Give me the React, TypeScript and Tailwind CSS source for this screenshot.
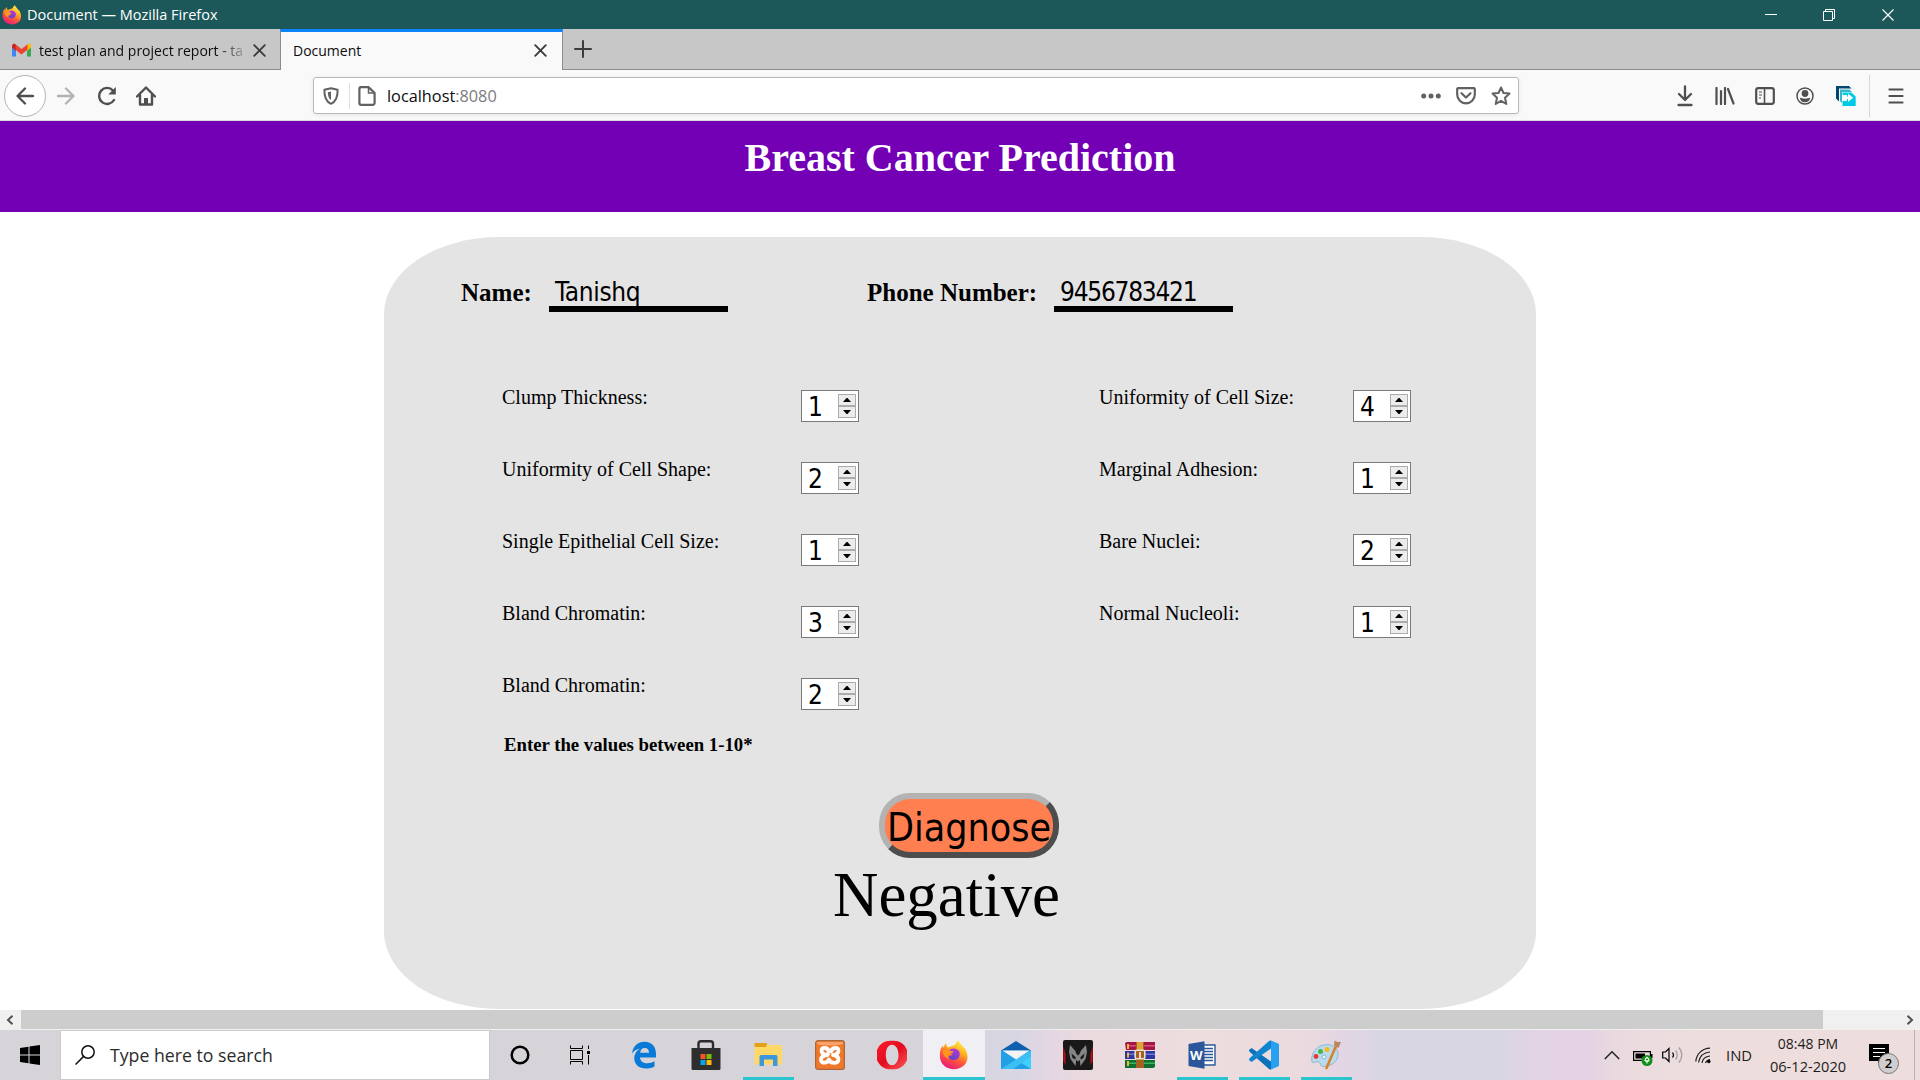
import type { ReactNode } from "react";

const ui = "font-['Open_Sans','Noto_Sans',sans-serif]";
const serif = "font-['Liberation_Serif',serif]";
const tahoma = "font-['DejaVu_Sans_Condensed','DejaVu_Sans',sans-serif] [font-stretch:condensed]";

function Icon({ w, h, children, className = "" }: { w: number; h: number; children: ReactNode; className?: string }) {
  return (
    <svg width={w} height={h} viewBox={`0 0 ${w} ${h}`} fill="none" className={`block shrink-0 ${className}`}>
      {children}
    </svg>
  );
}

function Slot({ className, children }: { className: string; children?: ReactNode }) {
  return <div className={`flex h-full shrink-0 items-center justify-center ${className}`}>{children}</div>;
}

function FirefoxLogo({ size, id }: { size: number; id: string }) {
  return (
    <svg width={size} height={size} viewBox="0 0 30 30" className="block shrink-0">
      <defs>
        <linearGradient id={`${id}a`} x1="0.8" y1="0" x2="0.3" y2="1">
          <stop offset="0" stopColor="#fff44f" />
          <stop offset="0.35" stopColor="#ffb320" />
          <stop offset="0.62" stopColor="#ff5a36" />
          <stop offset="1" stopColor="#e8177f" />
        </linearGradient>
        <linearGradient id={`${id}b`} x1="0.7" y1="0" x2="0.3" y2="1">
          <stop offset="0" stopColor="#b833e1" />
          <stop offset="1" stopColor="#5a45c8" />
        </linearGradient>
      </defs>
      <path d="M16 5C16.5 3 18 1.500 19.500 .5 20 3.500 23 4.500 24.500 7.500 26 7.500 26.500 9 27 10.500 29.800 17 28.500 22 25 25.500 20 30 11 30.500 5.500 26 .5 22 .2 16 1.500 10 2 8 3 6.500 4 5.500L4.500 8 6.500 3 8.500 7.500Z" fill={`url(#${id}a)`} />
      <path d="M12 9C15 7.500 19 8.800 20.500 12 21.500 17 18.500 20 15 20 11.500 20 9.500 18 9.300 15.500 11 16.500 13 15.500 14 14.500 11.500 14 10 12.500 10.500 10.500Z" fill={`url(#${id}b)`} />
      <path d="M3.500 11C6 9.500 8 9.500 10 10.500L15 11.500C14 13 12 13 11 14.500 9 15.500 9 17 10 18.500 6 18 4 15 3.500 11Z" fill="#ff9420" />
    </svg>
  );
}

function TitleBar() {
  return (
    <div className={`flex h-[29px] shrink-0 items-center bg-[#1c5759] text-white ${ui}`}>
      <div className="ml-0.5 flex flex-1 items-center gap-[5px]">
        <FirefoxLogo size={20} id="ft" />
        <span className="whitespace-pre text-[14.500px] leading-[29px]">Document — Mozilla Firefox</span>
      </div>
      <Slot className="w-[58px]">
        <Icon w={14} h={14}><path d="M1 6.500H13" stroke="#fff" /></Icon>
      </Slot>
      <Slot className="w-[58px]">
        <Icon w={14} h={14}>
          <path d="M1.500 3.500H10.500V12.500H1.500ZM3.500 3.500V1.500H12.500V10.500H10.500" stroke="#fff" />
        </Icon>
      </Slot>
      <Slot className="w-[60px]">
        <Icon w={14} h={14}><path d="M1.500 1.500L12.500 12.500M12.500 1.500L1.500 12.500" stroke="#fff" strokeWidth="1.200" /></Icon>
      </Slot>
      <div className="w-[2px]" />
    </div>
  );
}

function TabClose() {
  return (
    <Icon w={13} h={13}><path d="M1.200 1.200L11.800 11.800M11.800 1.200L1.200 11.800" stroke="#3c3c3c" strokeWidth="1.900" strokeLinecap="round" /></Icon>
  );
}

function TabBar() {
  return (
    <div className={`flex h-[41px] shrink-0 bg-[#c7c7c7] text-[14px] text-[#0c0c0d] ${ui}`}>
      <div className="flex w-[280px] items-center border-b border-[#8c8c8c] pl-3 pt-[3px]">
        <Icon w={19} h={15}>
          <path d="M0 3V13.500H4V6Z" fill="#4285f4" />
          <path d="M15 6V13.500H19V3Z" fill="#34a853" />
          <path d="M15 1.500L18 .6 19 2.500V4.500L15 8Z" fill="#fbbc04" />
          <path d="M0 4.500V2.500L1.500 .6 4 1.500V8Z" fill="#c5221f" />
          <path d="M3.500 1.200L9.500 6 15.500 1.200V6.800L9.500 11.500 3.500 6.800Z" fill="#ea4335" />
        </Icon>
        <div className="ml-2 w-[209px] whitespace-nowrap leading-[38px] [mask-image:linear-gradient(to_right,#000_178px,transparent_212px)]">
          test plan and project report - ta
        </div>
        <div className="ml-[5px]"><TabClose /></div>
      </div>
      <div className="flex w-[283px] items-center border-x border-t-[3px] border-x-[#8c8c8c] border-t-[#0a84ff] bg-[#f9f9fa] pb-px pl-3 pr-[15px] leading-[36px]">
        <span className="flex-1">Document</span>
        <TabClose />
      </div>
      <div className="flex flex-1 items-center border-b border-[#8c8c8c] pl-[11px]">
        <Icon w={18} h={18}><path d="M9 1V17M1 9H17" stroke="#3c3c3c" strokeWidth="2" strokeLinecap="round" /></Icon>
      </div>
    </div>
  );
}

function NavBar() {
  const g = "#4f4f50";
  return (
    <div className={`flex h-[51px] shrink-0 items-center border-b border-[#dcdcdc] bg-[#f9f9fa] pl-1 pt-px ${ui}`}>
      <div className="flex size-[42px] items-center justify-center rounded-full border border-[#b4b4b4] bg-white">
        <Icon w={18} h={18}><path d="M17 9H2M9 1.500L1.500 9L9 16.500" stroke={g} strokeWidth="2.300" strokeLinecap="round" strokeLinejoin="round" /></Icon>
      </div>
      <Slot className="w-[40px]">
        <Icon w={18} h={18}><path d="M1 9H16M9 1.500L16.500 9L9 16.500" stroke="#b2b2b3" strokeWidth="2.300" strokeLinecap="round" strokeLinejoin="round" /></Icon>
      </Slot>
      <Slot className="w-[41px]">
        <Icon w={20} h={20}>
          <path d="M17 14A8 8 0 1 1 16 4.500" stroke={g} strokeWidth="2.400" strokeLinecap="round" />
          <path d="M18.800 1V8.500H11.300Z" fill={g} />
        </Icon>
      </Slot>
      <Slot className="w-[38px]">
        <Icon w={20} h={20}>
          <path d="M1 10.500L10 1.500L19 10.500M4 9V18.500H16V9" stroke={g} strokeWidth="2.400" strokeLinecap="round" strokeLinejoin="round" />
          <path d="M8 12H12V19H8Z" fill={g} />
        </Icon>
      </Slot>
      <div className="ml-[148px] flex h-[37px] w-[1206px] items-center rounded-[3px] border border-[#b9b9ba] bg-white shadow-[0_1px_4px_rgba(0,0,0,0.08)]">
        <Slot className="w-[34px]">
          <Icon w={16} h={18}>
            <path d="M8 1.200L14.600 2.800C14.800 9 13.500 14.500 8 16.800 2.500 14.500 1.200 9 1.400 2.800Z" stroke="#616162" strokeWidth="2" strokeLinejoin="round" />
            <path d="M8 4.500V13C5.500 11.500 5 9 4.800 5.300Z" fill="#616162" />
          </Icon>
        </Slot>
        <div className="ml-px h-[26px] w-px bg-[#dedede]" />
        <Slot className="w-[34px]">
          <Icon w={18} h={20}>
            <path d="M3 1.200H10.500L16.600 7V17A1.800 1.800 0 0 1 14.800 18.800H3.200A1.800 1.800 0 0 1 1.400 17V3A1.800 1.800 0 0 1 3 1.200Z" stroke="#616162" strokeWidth="2.200" />
            <path d="M10.500 1.500V7H16.500" stroke="#616162" strokeWidth="1.500" />
          </Icon>
        </Slot>
        <span className="ml-[3px] flex-1 pt-px text-[16.300px] leading-[36px] text-[#0c0c0d]">
          localhost<span className="text-[#7c7c7d]">:8080</span>
        </span>
        <Slot className="w-[36px]">
          <Icon w={20} h={6}>
            <circle cx="2.700" cy="3" r="2.500" fill="#616162" /><circle cx="10" cy="3" r="2.500" fill="#616162" /><circle cx="17.300" cy="3" r="2.500" fill="#616162" />
          </Icon>
        </Slot>
        <Slot className="w-[34px]">
          <Icon w={20} h={18}>
            <path d="M2 1.200H18A.8 .8 0 0 1 18.800 2V7.500A8.800 8.800 0 0 1 1.200 7.500V2A.8 .8 0 0 1 2 1.200Z" stroke="#616162" strokeWidth="2.200" />
            <path d="M5.500 6.200L10 10.500L14.500 6.200" stroke="#616162" strokeWidth="2.200" strokeLinecap="round" strokeLinejoin="round" />
          </Icon>
        </Slot>
        <Slot className="w-[35px]">
          <Icon w={20} h={20}>
            <path d="M10 1.500L12.500 7L18.500 7.600L14 11.800L15.300 18L10 14.800L4.700 18L6 11.800L1.500 7.600L7.500 7Z" stroke="#616162" strokeWidth="2" strokeLinejoin="round" />
          </Icon>
        </Slot>
      </div>
      <div className="ml-auto flex h-full items-center">
        <Slot className="w-[40px]">
          <Icon w={16} h={22}><path d="M8 1.500V14M2 9L8 15L14 9M1.500 20H14.500" stroke={g} strokeWidth="2.300" strokeLinecap="round" strokeLinejoin="round" /></Icon>
        </Slot>
        <Slot className="w-[40px]">
          <Icon w={20} h={18}>
            <path d="M1.500 1V17M6 4V17M10 1V17" stroke={g} strokeWidth="2.200" strokeLinecap="round" />
            <path d="M13 2L18.500 16.500" stroke={g} strokeWidth="2.200" strokeLinecap="round" />
          </Icon>
        </Slot>
        <Slot className="w-[40px]">
          <Icon w={20} h={18}>
            <rect x="1.200" y="1.200" width="17.600" height="15.600" rx="2" stroke={g} strokeWidth="2.200" />
            <path d="M9.500 1V17" stroke={g} strokeWidth="1.600" />
            <path d="M4 5H7M4 8H7M4 11H6" stroke={g} strokeWidth="1.200" />
          </Icon>
        </Slot>
        <Slot className="w-[40px]">
          <Icon w={18} h={18}>
            <circle cx="9" cy="9" r="8" stroke={g} strokeWidth="1.500" />
            <circle cx="9" cy="6.500" r="3.400" fill={g} />
            <path d="M3.800 10.500C6 12 12 12 14.200 10.500 14 13.500 12 15.200 9 15.200 6 15.200 4 13.500 3.800 10.500Z" fill={g} />
          </Icon>
        </Slot>
        <Slot className="w-[41px]">
          <Icon w={20} h={20}>
            <path d="M0 0H13L15.500 2.500H3V15.500L0 12.500Z" fill="#01476b" />
            <path d="M4 3.500H13.500L16 6H6V17L4 15Z" fill="#38b6cc" />
            <path d="M6.500 6.500H15.500L19.700 10.500V20H6.500V15H11V9H6.500Z" fill="#00cbe5" />
            <path d="M6 11.800H13" stroke="#fff" strokeWidth="2.400" />
            <path d="M12 7.500L17 11.800L12 16Z" fill="#fff" />
          </Icon>
        </Slot>
        <div className="ml-[3px] h-[42px] w-px bg-[#d7d7db]" />
        <Slot className="w-[50px] pl-[2px]">
          <Icon w={16} h={18}><path d="M1.500 2.500H14.500M1.500 9H14.500M1.500 15.500H14.500" stroke={g} strokeWidth="2.200" strokeLinecap="round" /></Icon>
        </Slot>
      </div>
    </div>
  );
}

function NumberField({ value }: { value: number }) {
  return (
    <div className="mt-[9px] flex h-8 w-[58px] shrink-0 items-center justify-between border border-[#7a7a7a] bg-white pl-[6px]">
      <span className={`pt-[2px] text-[26px] leading-[28px] text-black ${tahoma}`}>{value}</span>
      <div className="mr-[2px] flex h-6 w-[18px] flex-col">
        <div className="flex h-3 items-center justify-center border border-[#acacac] bg-[#ececec]">
          <Icon w={8} h={4}><path d="M0 4L3.500 0H4.500L8 4Z" fill="#000" /></Icon>
        </div>
        <div className="flex h-3 items-center justify-center border border-[#acacac] bg-[#ececec]">
          <Icon w={8} h={4}><path d="M0 0L3.500 4H4.500L8 0Z" fill="#000" /></Icon>
        </div>
      </div>
    </div>
  );
}

const rows: { left: [string, number]; right?: [string, number] }[] = [
  { left: ["Clump Thickness:", 1], right: ["Uniformity of Cell Size:", 4] },
  { left: ["Uniformity of Cell Shape:", 2], right: ["Marginal Adhesion:", 1] },
  { left: ["Single Epithelial Cell Size:", 1], right: ["Bare Nuclei:", 2] },
  { left: ["Bland Chromatin:", 3], right: ["Normal Nucleoli:", 1] },
  { left: ["Bland Chromatin:", 2] },
];

function Page() {
  return (
    <div className={`flex h-[909px] shrink-0 flex-col bg-white text-black ${serif}`}>
      <div className="h-[91px] shrink-0 bg-[#7300b5] pt-[14px] text-center text-[40px] font-bold leading-[46px] text-white">
        Breast Cancer Prediction
      </div>
      <div className="mx-auto mt-[25px] h-[772px] w-[1152px] shrink-0 rounded-[10%] bg-[#e4e4e4] pt-[38px]">
        <div className="flex h-[37px] pl-[77px]">
          <span className="w-[88px] text-[25px] font-bold leading-[36px]">Name:</span>
          <div className={`w-[179px] border-b-[6px] border-black pl-[6px] text-[26px] leading-[34px] tracking-[-0.3px] ${tahoma}`}>Tanishq</div>
          <span className="ml-[139px] w-[187px] text-[25px] font-bold leading-[36px]">Phone Number:</span>
          <div className={`w-[179px] border-b-[6px] border-black pl-[6px] text-[26px] leading-[34px] tracking-[-1.25px] ${tahoma}`}>9456783421</div>
        </div>
        <div className="mt-[69px] pl-[118px]">
          {rows.map((r, i) => (
            <div key={i} className="flex h-[72px] items-start text-[20px]">
              <span className="w-[299px] leading-[32px]">{r.left[0]}</span>
              <NumberField value={r.left[1]} />
              {r.right && (
                <>
                  <span className="ml-[240px] w-[254px] leading-[32px]">{r.right[0]}</span>
                  <NumberField value={r.right[1]} />
                </>
              )}
            </div>
          ))}
        </div>
        <div className="mt-[-8px] pl-[120px] text-[18.750px] font-bold leading-[24px]">Enter the values between 1-10*</div>
        <button className={`ml-[495px] mt-[36px] flex h-[65px] w-[180px] items-center justify-center rounded-[31px] border-[6px] border-b-[#4d4d4d] border-l-[#b3b3b3] border-r-[#4d4d4d] border-t-[#b3b3b3] bg-[#ff7f50] pt-[3px] text-[39px] leading-none ${tahoma}`}>
          Diagnose
        </button>
        <div className="pl-[449px] text-[62.900px] leading-[74px]">Negative</div>
      </div>
      <div className="mt-px flex h-5 shrink-0 border-b border-[#f0f0f0] bg-[#f0f0f0]">
        <Slot className="w-[21px] pr-[2px]">
          <Icon w={8} h={10}><path d="M6.500 .8L2 5L6.500 9.200" stroke="#505050" strokeWidth="2" /></Icon>
        </Slot>
        <div className="w-[1802px] bg-[#cdcdcd]" />
        <div className="flex-1" />
        <Slot className="w-[21px]">
          <Icon w={8} h={10}><path d="M1.500 .8L6 5L1.500 9.200" stroke="#505050" strokeWidth="2" /></Icon>
        </Slot>
      </div>
    </div>
  );
}

function TaskButton({ running, active, children }: { running?: boolean; active?: boolean; children: ReactNode }) {
  return (
    <div className={`flex h-full w-[62px] shrink-0 flex-col items-center ${active ? "bg-[#f0eff4]" : ""}`}>
      <div className="flex h-[47px] items-center justify-center pt-[3px]">{children}</div>
      <div className={`h-[3px] ${active ? "w-full bg-[#2ac5cf]" : running ? "w-[51px] bg-[#2ac5cf]" : ""}`} />
    </div>
  );
}

function Taskbar() {
  return (
    <div className={`flex h-[50px] shrink-0 items-center bg-[linear-gradient(to_right,#d6d4d8_0px,#d6d4d8_900px,#d9d6e4_1020px,#e5d7e2_1055px,#eadadf_1080px,#eddddd_1200px,#eadadf_1310px,#e3d5e4_1340px,#d9d6e3_1380px,#d9d6e3_1500px,#e3d3e4_1540px,#e3d3e4_1585px,#eadadf_1620px,#eddedd_1700px,#eddedd_1920px)] ${ui}`}>
      <Slot className="w-[61px] pr-px">
        <Icon w={20} h={20}>
          <path d="M0 3L8.500 1.800V9.500H0ZM9.500 1.600L20 0V9.500H9.500ZM0 10.500H8.500V18.200L0 17ZM9.500 10.500H20V20L9.500 18.400Z" fill="#000" />
        </Icon>
      </Slot>
      <div className="flex h-12 w-[428px] items-center bg-white pl-[14px] outline outline-1 outline-[#cbcbcd]">
        <Icon w={20} h={20}>
          <circle cx="13" cy="7" r="6.200" stroke="#111" strokeWidth="1.500" />
          <path d="M8.600 11.400L.6 19.500" stroke="#111" strokeWidth="1.500" />
        </Icon>
        <span className="ml-[15px] text-[17.700px] leading-[48px] text-[#2b2b2b]">Type here to search</span>
      </div>
      <Slot className="w-[62px]">
        <Icon w={20} h={20}><circle cx="10" cy="10" r="8.300" stroke="#000" strokeWidth="2.500" /></Icon>
      </Slot>
      <Slot className="w-[62px] pb-px pr-[4px]">
        <Icon w={22} h={20}>
          <path d="M1.500 .5V3.500H13.500V.5M1.500 5.500H13.500V14.500H1.500ZM1.500 19.500V16.500H13.500V19.500M19.500 .5V4M19.500 10V19.500" stroke="#000" />
          <rect x="18" y="6" width="3" height="3" fill="#000" />
        </Icon>
      </Slot>
      <TaskButton>
        <Icon w={26} h={28}>
          <path d="M1 12.500C2 5 7 .8 13.500 .8 21 .8 25 6 25 13V16.500H9C9.300 20.500 12.500 22.300 16.500 22.300 19 22.300 21.500 21.500 23.500 20.300V25.500C21 26.900 18 27.500 15 27.500 8 27.500 3.300 23.500 3.300 17.500 3.300 13 5.500 9.500 9.500 7.500 5.500 8 2.800 10 1 12.500ZM9.200 11.800H18C18 8.800 16.500 7 13.700 7 11 7 9.500 9 9.200 11.800Z" fill="#0a7ad9" />
        </Icon>
      </TaskButton>
      <TaskButton>
        <Icon w={30} h={30}>
          <path d="M7.500 9V3.500A2.500 2.500 0 0 1 10 1.300H19.500A2.500 2.500 0 0 1 22 3.500V9" stroke="#2b2b2b" strokeWidth="2.400" />
          <path d="M.5 8H29.500V28.500A1.500 1.500 0 0 1 28 30H2A1.500 1.500 0 0 1 .5 28.500Z" fill="#2e2e2e" />
          <path d="M9.500 14H14.500V19H9.500Z" fill="#f35325" /><path d="M15.500 14H20.500V19H15.500Z" fill="#81bc06" />
          <path d="M9.500 20H14.500V25H9.500Z" fill="#05a6f0" /><path d="M15.500 20H20.500V25H15.500Z" fill="#ffba08" />
        </Icon>
      </TaskButton>
      <TaskButton running>
        <Icon w={28} h={26}>
          <path d="M.5 2A1 1 0 0 1 1.500 1H12L13.500 3H27A1 1 0 0 1 28 4V22.500H.5Z" fill="#ffd867" />
          <path d="M.5 5V2A1 1 0 0 1 1.500 1H12A1 1 0 0 1 13 2.500L12 5Z" fill="#e5a01b" />
          <path d="M5.500 24V14.500A1.500 1.500 0 0 1 7 13H22A1.500 1.500 0 0 1 23.500 14.500V24H19V17.500H10V24Z" fill="#3c97dd" />
        </Icon>
      </TaskButton>
      <TaskButton>
        <Icon w={30} h={30}>
          <rect x=".6" y=".6" width="28.800" height="28.800" rx="2.500" fill="#f0782a" stroke="#a8683f" strokeWidth="1.200" />
          <path d="M2 2H28V4C20 6 10 6 2 4Z" fill="#f9a36a" />
          <path d="M12.500 15C8 15.500 6 17 6 19.500 6 24 12.500 23.500 14 19.500 15 23.500 23.500 24.500 23.500 19.500 23.500 17 21.500 15.500 18 15 21.500 14.500 23.500 13 23.500 10.500 23.500 6.500 17 7.500 16 11.500M14 11.500C13 7.500 6.500 6.500 6.500 10.500 6.500 13 9 14.500 12.500 15" stroke="#fff" strokeWidth="3.800" strokeLinejoin="round" strokeLinecap="round" />
          <path d="M12 11.500L14.500 15" stroke="#fff" strokeWidth="2" />
        </Icon>
      </TaskButton>
      <TaskButton>
        <Icon w={30} h={30}>
          <defs><linearGradient id="op" x1="0" y1="0" x2="1" y2="1"><stop offset="0" stopColor="#ff1b2d" /><stop offset=".5" stopColor="#e30c20" /><stop offset="1" stopColor="#ff5a5a" /></linearGradient></defs>
          <path fillRule="evenodd" d="M15 .8A14.300 14.300 0 1 1 15 29.200A14.300 14.300 0 1 1 15 .8ZM15 4.800C11.200 4.800 8.800 9 8.800 15C8.800 21 11.200 25.200 15 25.200C18.800 25.200 21.500 21 21.500 15C21.500 9 18.800 4.800 15 4.800Z" fill="url(#op)" />
        </Icon>
      </TaskButton>
      <TaskButton active><FirefoxLogo size={30} id="fb" /></TaskButton>
      <TaskButton>
        <Icon w={30} h={30}>
          <path d="M0 10.500L15 1L30 10.500V13H0Z" fill="#0f5fae" />
          <path d="M0 10.500V29H30V10.500Z" fill="#21a0e6" />
          <path d="M30 10.500V29L15 19.500Z" fill="#41d0fb" />
          <path d="M0 29L30 10.500V17L12 29Z" fill="#3cc0f4" />
          <path d="M1.500 10.500H28.500L15 19.500Z" fill="#f3f3f3" />
        </Icon>
      </TaskButton>
      <TaskButton>
        <Icon w={30} h={30}>
          <rect width="30" height="30" rx="2" fill="#191919" />
          <path d="M.3 6L2.500 14V25L.3 21ZM29.700 6L27.500 14V25L29.700 21Z" fill="#b51218" />
          <path d="M7 5L12 10.500L13.500 14L15 15.500L16.500 14L18 10.500L23 5L24 12L22.500 19L17.500 26L16.800 20L15 21.500L13.200 20L12.500 26L7.500 19L6 12Z" fill="#858585" />
          <path d="M8.500 13.500L12.500 17V19.500L9.500 18ZM21.500 13.500L17.500 17V19.500L20.500 18Z" fill="#191919" />
        </Icon>
      </TaskButton>
      <TaskButton>
        <Icon w={30} h={28}>
          <path d="M0 2L2 1H30V9H1Z" fill="#a31746" /><path d="M2 4H30V5.500H2Z" fill="#d8517b" />
          <path d="M0 10H30V18H0Z" fill="#3036a0" /><path d="M2 12.500H30V14H2Z" fill="#6c76d8" />
          <path d="M0 19H30V26L28 27H0Z" fill="#0e6f31" /><path d="M2 21.500H30V23H2Z" fill="#3db35d" />
          <path d="M2 3H4V8H2ZM2 11.500H4V16.500H2ZM2 20H4V25H2Z" fill="#f2b632" />
          <path d="M11 1H19V27H11Z" fill="#a6601f" /><path d="M12 1H18V9H12Z" fill="#e0a33c" />
          <rect x="10.200" y="9.200" width="9.600" height="8.500" rx="1.500" stroke="#e9e2cf" strokeWidth="1.600" />
          <path d="M15 11V17" stroke="#fff" strokeWidth="1.500" />
        </Icon>
      </TaskButton>
      <TaskButton running>
        <div className="relative">
          <Icon w={28} h={28}>
            <path d="M14 4H27V24H14Z" fill="#fff" stroke="#2b579a" strokeWidth="1.400" />
            <path d="M16 7.500H25M16 10.500H25M16 13.500H25M16 16.500H25M16 19.500H25" stroke="#2b579a" strokeWidth="1.300" />
            <path d="M.5 3L16.500 .3V27.700L.5 25Z" fill="#2b579a" />
          </Icon>
          <span className="absolute left-[2px] top-[6px] text-[13px] font-bold leading-4 text-white">W</span>
        </div>
      </TaskButton>
      <TaskButton running>
        <Icon w={30} h={30}>
          <path d="M22 .5L29 3.500A1.500 1.500 0 0 1 30 5V25A1.500 1.500 0 0 1 29 26.500L22 29.500Z" fill="#27a0f2" />
          <path d="M0 10L2.500 8L22 21.500V29.500C21 29.800 20.500 29.500 20 29L.3 11.500Z" fill="#0a72bb" />
          <path d="M0 20L2.500 22L22 8.500V.5C21 .2 20.500 .5 20 1L.3 18.500Z" fill="#1184cf" />
        </Icon>
      </TaskButton>
      <TaskButton running>
        <Icon w={30} h={30}>
          <path d="M13 5C20 3.500 27 7 27 14 27 22 20 26.500 12 26.500 9 26.500 10 22 7 21.500 4 21.500 1.500 24.500 .8 21 0 13 5 6.500 13 5Z" fill="#b9dbee" stroke="#8fb7cf" />
          <circle cx="5" cy="16.500" r="2.400" fill="#e23b2e" /><circle cx="9.500" cy="11.500" r="2.500" fill="#46b648" /><circle cx="16" cy="9.500" r="2.500" fill="#f5b921" /><circle cx="13" cy="17" r="2" fill="#eaf4fa" stroke="#7fa9c2" strokeWidth=".8" />
          <path d="M25 6L15.500 28" stroke="#d9812a" strokeWidth="2.600" strokeLinecap="round" />
          <path d="M23 5L23.500 .5L26.500 2L30 2L27.500 8Z" fill="#b78961" />
        </Icon>
      </TaskButton>
      <div className="ml-auto flex h-full items-center text-[14px] text-[#1c1c1c]">
        <Icon w={16} h={10} className="mr-[13px]"><path d="M.8 9L8 1.800L15.200 9" stroke="#222" strokeWidth="1.500" /></Icon>
        <Icon w={20} h={16} className="mr-[9px] mt-[5px]">
          <path d="M.6 1.600H17.400V10.400H.6Z" stroke="#000" strokeWidth="1.200" /><path d="M2.500 3.500H12V8.500H2.500Z" fill="#000" /><path d="M18 4H19.500V8H18Z" fill="#000" />
          <circle cx="14" cy="10.500" r="5.500" fill="#109019" />
          <path d="M14 13.500V10M12 10.500C12 9 13 8 14 7.300 15 8 16 9 16 10.500 15 11.500 13 11.500 12 10.500Z" stroke="#fff" strokeWidth="1.100" />
        </Icon>
        <Icon w={21} h={18} className="mr-[12px]">
          <path d="M.7 6H3.500L7 2.500V15.500L3.500 12H.7Z" stroke="#000" strokeWidth="1.200" />
          <path d="M10.500 6.500C11.700 8 11.700 10 10.500 11.500" stroke="#000" strokeWidth="1.200" />
          <path d="M13.500 4.500C15.800 7 15.800 11 13.500 13.500M16.800 1.500C20.700 5.500 20.700 12.500 16.800 16.500" stroke="#a79fa3" strokeWidth="1.300" />
        </Icon>
        <Icon w={17} h={17} className="mr-[14px]">
          <path d="M.8 14.500C1.500 7 7 1.500 15 1.200M3.500 15.500C4.500 9.500 8.500 5.500 15 5M7 16C7.500 12 10.500 9.500 15 9M10.500 16C11 14 12.500 13 15 12.500" stroke="#222" strokeWidth="1.200" />
          <circle cx="13.800" cy="14.500" r="1.700" fill="#000" />
        </Icon>
        <span className="w-[44px] text-[14.800px] leading-[50px]">IND</span>
        <div className="flex w-[76px] flex-col items-center whitespace-nowrap leading-[23px]">
          <span>08:48 PM</span>
          <span className="text-[14.600px]">06-12-2020</span>
        </div>
        <div className="relative ml-[23px] mt-[-3px]">
          <Icon w={20} h={20}>
            <path d="M0 0H20V17H13L9 20V17H0Z" fill="#000" /><path d="M4 4.500H16M4 8.500H16M4 12.500H11" stroke="#fff" strokeWidth="1.200" />
          </Icon>
          <span className="absolute left-[9px] top-[9px] flex size-[21px] items-center justify-center rounded-full border border-[#777] bg-[#d0cdcf] text-[13px] font-semibold leading-none text-black">2</span>
        </div>
        <div className="ml-[25px] mr-[5px] h-full w-px bg-[#b9aeb0]" />
      </div>
    </div>
  );
}

export default function App() {
  return (
    <div className="flex h-[1080px] w-[1920px] flex-col overflow-hidden">
      <TitleBar />
      <TabBar />
      <NavBar />
      <Page />
      <Taskbar />
    </div>
  );
}
